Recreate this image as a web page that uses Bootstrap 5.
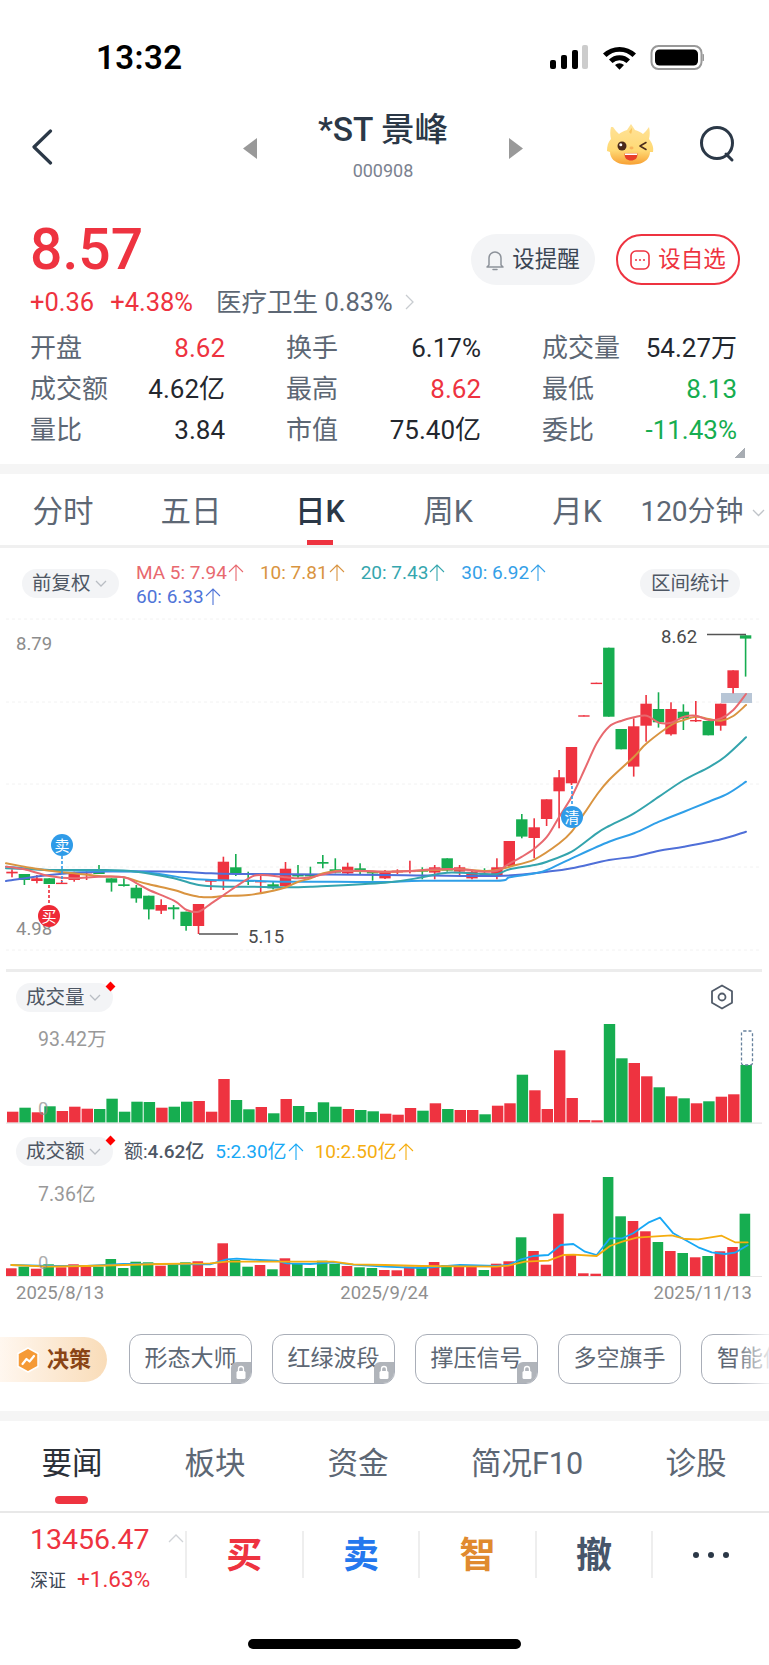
<!DOCTYPE html>
<html lang="zh-CN">
<head>
<meta charset="UTF-8">
<meta name="viewport" content="width=device-width, initial-scale=1.0">
<title>*ST景峰</title>
<link href="https://cdn.jsdelivr.net/npm/bootstrap@5.3.0/dist/css/bootstrap.min.css" rel="stylesheet">
<style>
body { width: 769px; height: 1665px; overflow: hidden; background: #fff; color: #2b3847; font-family: Roboto, "Noto Sans CJK SC", sans-serif; }
.up { color: #ee3340; }
.down { color: #16ad50; }
.status-bar { height: 100px; padding: 37px 65px 0 96px; }
.clock { font: 600 33px/1 Roboto, sans-serif; color: #000; letter-spacing: .4px; }
.top-nav { height: 100px; padding: 25px 32px 0 31px; }
.stock-box { width: 320px; margin-left: 190px; margin-right: 84px; }
.stock-name { font-size: 33.5px; line-height: 40px; font-weight: 500; }
.stock-code { font-size: 18px; line-height: 22px; color: #7b8290; margin-top: 10px; }
.quote { height: 264px; padding: 0 32px 0 30px; position: relative; }
.price { font-size: 57px; line-height: 60px; font-weight: 500; margin-top: 20px; }
.quote-actions { margin-top: 34px; margin-right: -3px; }
.pill-btn { height: 51px; width: 124px; border-radius: 26px; font-size: 22.5px; gap: 8px; }
.pill-grey { background: #f3f4f6; color: #3b4654; }
.pill-red { border: 2px solid #ee3340; color: #ee3340; margin-left: 21px; }
.change-line { font-size: 25.5px; line-height: 30px; margin-top: 2px; }
.sector { color: #5d6774; margin-left: 23px; }
.stat-grid { display: grid; grid-template-columns: repeat(3, 195px); column-gap: 61px; margin-top: 11px; }
.stat-cell { display: flex; justify-content: space-between; height: 41px; align-items: center; font-size: 26px; color: #23272e; }
.stat-cell span:first-child { color: #5d6774; }
.corner { position: absolute; right: 24px; bottom: 6px; width: 10px; height: 10px; background: linear-gradient(135deg, transparent 50%, #a8adb3 50%); }
.band { height: 10px; background: #f5f5f5; }
.k-tabs { height: 74px; border-bottom: 3px solid #f0f0f0; position: relative; font-size: 30.5px; color: #5d6774; }
.k-tab { position: absolute; top: 15px; line-height: 46px; transform: translateX(-50%); white-space: nowrap; }
.k-tab.on { color: #2b3847; font-weight: 500; }
.k-mark { position: absolute; left: 307px; top: 66px; width: 26px; height: 5px; background: #ee3340; }
.k-more { position: absolute; left: 752px; top: 35px; }
.chart-bar { height: 70px; padding: 21px 29px 0 22px; }
.soft-pill { background: #f3f4f6; border-radius: 15px; height: 29px; font-size: 19.5px; color: #4e5764; }
.legend-box { width: 440px; margin-left: 17px; margin-top: -8px; font-size: 19px; line-height: 24px; }
.legend-box span { margin-right: 16px; white-space: nowrap; }
.up-arrow { width: 16px; height: 17px; vertical-align: -2px; margin-left: 1px; fill: none; stroke: currentColor; stroke-width: 1.1; }
.ma5 { color: #e8696f; } .ma10 { color: #d99440; } .ma20 { color: #35a6ae; } .ma30 { color: #34a0e8; } .ma60 { color: #4f74d8; }
.chart-svg { display: block; }
.chart-svg text { font-family: Roboto, "Noto Sans CJK SC", sans-serif; }
.panel-head { padding-left: 16px; position: relative; border-top: 3px solid #ececec; margin: 0 7px 0 6px; }
.vol-head { height: 55px; padding: 11px 0 0 10px; }
.amt-head { height: 52px; padding: 12px 0 0 16px; margin: 0; font-size: 19px; }
.amt-head > span { margin-left: 11px; white-space: nowrap; }
.dot-red { width: 7px; height: 7px; background: #f00; transform: rotate(45deg); position: absolute; right: -1px; top: 0; }
.hex { position: absolute; right: 28px; top: 12px; }
.date-row { height: 30px; padding: 0 17px 0 16px; font-size: 18.5px; color: #8f8f8f; line-height: 30px; }
.signal-row { height: 103px; padding-top: 26px; position: relative; overflow: hidden; }
.decide { width: 107px; height: 45px; margin-top: 3px; border-radius: 0 23px 23px 0; background: linear-gradient(90deg, #fff7ef, #f9dcb8); font-size: 22px; font-weight: 700; color: #8a4416; gap: 7px; padding-left: 16px; flex-shrink: 0; }
.sig-btn { width: 123px; height: 50px; flex-shrink: 0; margin-left: 20px; border: 1.5px solid #a9aeb8; border-radius: 12px; font-size: 23px; color: #5d6774; position: relative; white-space: nowrap; overflow: hidden; }
.sig-cut { justify-content: flex-start; padding-left: 15px; }
.lock-tag { position: absolute; right: 0; bottom: 0; width: 20px; height: 21px; background: #b0b4ba; border-radius: 6px 0 0 0; }
.lock-tag svg { display: block; }
.fade-right { position: absolute; right: 0; top: 20px; bottom: 20px; width: 36px; background: linear-gradient(90deg, rgba(255,255,255,0), rgba(255,255,255,.85)); }
.news-tabs { height: 92px; border-bottom: 2px solid #e8e8e8; position: relative; font-size: 30.5px; color: #5d6774; }
.news-tab { position: absolute; top: 20px; line-height: 46px; transform: translateX(-50%); white-space: nowrap; }
.news-tab.on { color: #2b3038; }
.news-mark { position: absolute; left: 55px; top: 75px; width: 33px; height: 8px; border-radius: 4px; background: #ee3340; }
.trade-bar { height: 92px; padding: 9px 0 0 30px; }
.index-box { width: 155px; flex-shrink: 0; position: relative; }
.index-val { font-size: 28.5px; line-height: 36px; color: #ee3340; }
.index-sub { font-size: 18px; line-height: 30px; margin-top: 6px; color: #3b4654; }
.index-sub .up { font-size: 22.5px; margin-left: 11px; }
.caret-up { position: absolute; right: 1px; top: 11px; }
.trade-btn { width: 116.6px; height: 47px; margin-top: 9px; border-left: 2px solid #eeeeee; font-size: 36px; font-weight: 700; line-height: 50px; text-align: center; }
.home-bar { width: 273px; height: 10px; border-radius: 5px; background: #000; margin: 34px 0 0 248px; }
</style>
</head>
<body>

<!-- status bar -->
<div class="status-bar d-flex justify-content-between">
    <div class="clock mt-1">13:32</div>
    <svg width="154" height="26" viewBox="0 0 154 26" class="mt-2">
        <rect x="0" y="15" width="6" height="9" rx="2" fill="#000"/>
        <rect x="11" y="10" width="6" height="14" rx="2" fill="#000"/>
        <rect x="22" y="5" width="6" height="19" rx="2" fill="#000"/>
        <rect x="32" y="0" width="6" height="24" rx="2" fill="#ccc"/>
        <path d="M53 8.5a24 24 0 0 1 33 0l-3.500 3.500a19 19 0 0 0-26 0zM59 14.500a15 15 0 0 1 21 0l-3.500 3.500a10 10 0 0 0-14 0zM65 20a7 7 0 0 1 9 0l-4.500 4.800z" fill="#000"/>
        <rect x="101.500" y="1" width="50" height="23" rx="7" fill="none" stroke="#999" stroke-width="2"/>
        <rect x="105" y="4.500" width="43" height="16" rx="4.500" fill="#000"/>
        <path d="M152.500 9v7a3.500 3.500 0 0 0 0-7z" fill="#999"/>
    </svg>
</div>

<!-- nav -->
<div class="top-nav d-flex align-items-start">
    <svg width="22" height="36" viewBox="0 0 22 36" class="mt-1 flex-shrink-0">
        <path d="M19.500 2L3 18l16.500 16" fill="none" stroke="#2b3847" stroke-width="3.200" stroke-linecap="round" stroke-linejoin="round"/>
    </svg>
    <div class="stock-box d-flex align-items-start justify-content-between">
        <svg width="14" height="21" viewBox="0 0 14 21" style="margin-top:13px"><path d="M14 0v21L0 10.500z" fill="#999"/></svg>
        <div class="text-center" style="margin-top:-15px">
            <div class="stock-name">*ST 景峰</div>
            <div class="stock-code">000908</div>
        </div>
        <svg width="14" height="21" viewBox="0 0 14 21" style="margin-top:13px"><path d="M0 0v21l14-10.500z" fill="#999"/></svg>
    </div>
    <svg width="50" height="46" viewBox="0 0 50 46" class="flex-shrink-0" style="margin-top:-1px">
        <defs>
            <linearGradient id="fur" x1="0" y1="0" x2="0" y2="1"><stop offset="0" stop-color="#ffe39a"/><stop offset=".65" stop-color="#ffd974"/><stop offset="1" stop-color="#f7a033"/></linearGradient>
        </defs>
        <path d="M6 3c2 3 4 5 6 7 2-2 5-3 8-4l4-6 4 6c3 1 6 2 8 4 2-2 4-4 6-7 1 4 1 8 0 12 3 4 5 8 4 13l-3 0c0 6-5 11-12 12-5 1-11 1-16 0-7-1-12-6-12-12l-3-1c0-5 1-9 4-12-1-4-1-8 0-12z" fill="url(#fur)"/>
        <path d="M22 8c1-2 2-3 3-4 0 2 0 4-1 6z" fill="#f9c45e"/>
        <circle cx="15" cy="22" r="4.500" fill="#4a2a1a"/>
        <circle cx="13.800" cy="20.800" r="1.500" fill="#fff"/>
        <path d="M39 18.500l-6 3.500 6 3.500" fill="none" stroke="#4a2a1a" stroke-width="1.500" stroke-linecap="round" stroke-linejoin="round"/>
        <path d="M17.500 29.500h13c0 5-2.500 7-6.500 7s-6.500-2-6.500-7z" fill="#e8402a"/>
        <path d="M18 29.500h12v1.500H18z" fill="#fff"/>
        <ellipse cx="24.500" cy="24" rx="2" ry="1.400" fill="#f8b45c"/>
    </svg>
    <svg width="38" height="38" viewBox="0 0 38 38" class="flex-shrink-0" style="margin-left:42px">
        <circle cx="18" cy="18" r="15.500" fill="none" stroke="#2b3847" stroke-width="3"/>
        <path d="M27 29l6 6" stroke="#2b3847" stroke-width="3" stroke-linecap="round"/>
    </svg>
</div>

<!-- quote -->
<div class="quote">
    <div class="d-flex justify-content-between align-items-start">
        <div class="price up">8.57</div>
        <div class="d-flex quote-actions">
            <div class="pill-btn pill-grey d-flex align-items-center justify-content-center">
                <svg width="18" height="22" viewBox="0 0 18 22"><path d="M3 16V9a6 6 0 0 1 12 0v7l2 2H1zM7 20.500h4" fill="none" stroke="#8d929a" stroke-width="1.500" stroke-linejoin="round" stroke-linecap="round"/></svg>
                设提醒
            </div>
            <div class="pill-btn pill-red d-flex align-items-center justify-content-center">
                <svg width="20" height="20" viewBox="0 0 20 20"><rect x="1" y="1" width="18" height="18" rx="5" fill="none" stroke="#ee3340" stroke-width="1.600"/><circle cx="6" cy="10" r="1" fill="#ee3340"/><circle cx="10" cy="10" r="1" fill="#ee3340"/><circle cx="14" cy="10" r="1" fill="#ee3340"/></svg>
                设自选
            </div>
        </div>
    </div>
    <div class="change-line d-flex align-items-center">
        <span class="up">+0.36</span><span class="up" style="margin-left:16px">+4.38%</span>
        <span class="sector">医疗卫生 0.83%</span>
        <svg width="9" height="16" viewBox="0 0 9 16" style="margin-left:12px"><path d="M1 1l7 7-7 7" fill="none" stroke="#c8ccd0" stroke-width="1.300"/></svg>
    </div>
    <div class="stat-grid">
        <div class="stat-cell"><span>开盘</span><span class="up">8.62</span></div>
        <div class="stat-cell"><span>换手</span><span>6.17%</span></div>
        <div class="stat-cell"><span>成交量</span><span>54.27万</span></div>
        <div class="stat-cell"><span>成交额</span><span>4.62亿</span></div>
        <div class="stat-cell"><span>最高</span><span class="up">8.62</span></div>
        <div class="stat-cell"><span>最低</span><span class="down">8.13</span></div>
        <div class="stat-cell"><span>量比</span><span>3.84</span></div>
        <div class="stat-cell"><span>市值</span><span>75.40亿</span></div>
        <div class="stat-cell"><span>委比</span><span class="down">-11.43%</span></div>
    </div>
    <div class="corner"></div>
</div>
<div class="band"></div>

<!-- period tabs -->
<div class="k-tabs">
    <div class="k-tab" style="left:63px">分时</div>
    <div class="k-tab" style="left:191px">五日</div>
    <div class="k-tab on" style="left:320px">日K</div>
    <div class="k-tab" style="left:448px">周K</div>
    <div class="k-tab" style="left:577px">月K</div>
    <div class="k-tab" style="left:692px;font-size:28px">120分钟</div>
    <svg class="k-more" width="13" height="8" viewBox="0 0 13 8"><path d="M1 1l5.500 5.500L12 1" fill="none" stroke="#c0c4c9" stroke-width="1.300"/></svg>
    <div class="k-mark"></div>
</div>

<!-- chart toolbar -->
<div class="chart-bar d-flex align-items-start">
    <div class="soft-pill d-flex align-items-center gap-1 flex-shrink-0" style="width:97px;padding-left:10px">前复权
        <svg width="12" height="7" viewBox="0 0 12 7"><path d="M1 1l5 5 5-5" fill="none" stroke="#b9bdc3" stroke-width="1.300"/></svg>
    </div>
    <div class="legend-box flex-shrink-0">
        <span class="ma5">MA 5: 7.94<svg class="up-arrow" viewBox="0 0 16 17"><path d="M1 8l7-7 7 7M8 1v16"/></svg></span><span class="ma10">10: 7.81<svg class="up-arrow" viewBox="0 0 16 17"><path d="M1 8l7-7 7 7M8 1v16"/></svg></span><span class="ma20">20: 7.43<svg class="up-arrow" viewBox="0 0 16 17"><path d="M1 8l7-7 7 7M8 1v16"/></svg></span><span class="ma30">30: 6.92<svg class="up-arrow" viewBox="0 0 16 17"><path d="M1 8l7-7 7 7M8 1v16"/></svg></span><br>
        <span class="ma60">60: 6.33<svg class="up-arrow" viewBox="0 0 16 17"><path d="M1 8l7-7 7 7M8 1v16"/></svg></span>
    </div>
    <div class="soft-pill d-flex align-items-center justify-content-center flex-shrink-0 ms-auto" style="width:100px">区间统计</div>
</div>

<!-- main chart, drawn in screen coordinates through the viewBox -->
<svg id="main-chart" class="chart-svg" width="769" height="351" viewBox="0 618 769 351"></svg>

<div class="panel-head vol-head">
    <div class="soft-pill d-inline-flex align-items-center gap-1 position-relative" style="width:97px;padding-left:10px">成交量
        <svg width="12" height="7" viewBox="0 0 12 7"><path d="M1 1l5 5 5-5" fill="none" stroke="#b9bdc3" stroke-width="1.300"/></svg>
        <i class="dot-red"></i>
    </div>
    <svg class="hex" width="24" height="26" viewBox="0 0 24 26"><path d="M12 1.500l10 5.700v11.600l-10 5.700-10-5.700V7.200z" fill="none" stroke="#515b69" stroke-width="1.800" stroke-linejoin="round"/><circle cx="12" cy="13" r="3.500" fill="none" stroke="#515b69" stroke-width="1.800"/></svg>
</div>
<svg id="vol-chart" class="chart-svg" width="769" height="101" viewBox="0 1024 769 101"></svg>

<div class="panel-head amt-head d-flex align-items-start" style="border-top:0">
    <div class="soft-pill d-inline-flex align-items-center gap-1 position-relative flex-shrink-0" style="width:97px;padding-left:10px">成交额
        <svg width="12" height="7" viewBox="0 0 12 7"><path d="M1 1l5 5 5-5" fill="none" stroke="#b9bdc3" stroke-width="1.300"/></svg>
        <i class="dot-red"></i>
    </div>
    <span style="color:#4e5764;margin-top:1px">额:<b class="fw-medium">4.62亿</b></span>
    <span style="color:#18a8f5;margin-top:1px">5:2.30亿<svg class="up-arrow" viewBox="0 0 16 17"><path d="M1 8l7-7 7 7M8 1v16"/></svg></span>
    <span style="color:#f5ad0f;margin-top:1px">10:2.50亿<svg class="up-arrow" viewBox="0 0 16 17"><path d="M1 8l7-7 7 7M8 1v16"/></svg></span>
</div>
<svg id="amt-chart" class="chart-svg" width="769" height="101" viewBox="0 1177 769 101"></svg>

<div class="date-row d-flex justify-content-between">
    <span>2025/8/13</span><span style="margin-left:11px">2025/9/24</span><span>2025/11/13</span>
</div>

<!-- signal buttons -->
<div class="signal-row d-flex align-items-start">
    <div class="decide d-flex align-items-center">
        <svg width="24" height="26" viewBox="0 0 24 26"><path d="M12 1l10 5.500v13L12 25 2 19.500v-13z" fill="#f59a36" stroke="#fff" stroke-width="1.500" stroke-linejoin="round"/><path d="M6.500 17l4-5 3 2.500L18 9" fill="none" stroke="#fff" stroke-width="2.200" stroke-linecap="round" stroke-linejoin="round"/></svg>
        <span>决策</span>
    </div>
    <div class="sig-btn d-flex align-items-center justify-content-center" style="margin-left:22px">形态大师<i class="lock-tag" data-lock></i></div>
    <div class="sig-btn d-flex align-items-center justify-content-center">红绿波段<i class="lock-tag" data-lock></i></div>
    <div class="sig-btn d-flex align-items-center justify-content-center">撑压信号<i class="lock-tag" data-lock></i></div>
    <div class="sig-btn d-flex align-items-center justify-content-center">多空旗手</div>
    <div class="sig-btn d-flex align-items-center sig-cut">智能信号</div>
    <div class="fade-right"></div>
</div>
<div class="band"></div>

<!-- news tabs -->
<div class="news-tabs">
    <div class="news-tab on" style="left:72px">要闻</div>
    <div class="news-tab" style="left:215px">板块</div>
    <div class="news-tab" style="left:358px">资金</div>
    <div class="news-tab" style="left:527px">简况F10</div>
    <div class="news-tab" style="left:696px">诊股</div>
    <div class="news-mark"></div>
</div>

<!-- bottom trade bar -->
<div class="trade-bar d-flex align-items-start">
    <div class="index-box">
        <div class="index-val">13456.47</div>
        <div class="index-sub">深证<span class="up">+1.63%</span></div>
        <svg class="caret-up" width="16" height="10" viewBox="0 0 16 10"><path d="M1 9l7-7 7 7" fill="none" stroke="#d0d3d7" stroke-width="1.300"/></svg>
    </div>
    <div class="trade-btn up">买</div>
    <div class="trade-btn" style="color:#2478ee">卖</div>
    <div class="trade-btn" style="color:#e08a2e">智</div>
    <div class="trade-btn" style="color:#47566b">撤</div>
    <div class="trade-btn d-flex align-items-center justify-content-center" style="gap:10px">
        <svg width="38" height="8" viewBox="0 0 38 8"><circle cx="4" cy="4" r="3" fill="#2b3847"/><circle cx="19" cy="4" r="3" fill="#2b3847"/><circle cx="34" cy="4" r="3" fill="#2b3847"/></svg>
    </div>
</div>
<div class="home-bar"></div>

<script src="https://cdn.jsdelivr.net/npm/bootstrap@5.3.0/dist/js/bootstrap.bundle.min.js"></script>
<script>
    const RED = '#ee3340', GREEN = '#16ad50';

    // values were read off the reference at 3x: y here = (screen y - panel base) * 3
    // [color, bodyTop, bodyBottom, wickTop, wickBottom]
    const candles = [
        ['r',965,970,958,982],['g',972,990,972,1005],['r',985,993,975,1000],['g',985,1002,985,1002],['r',998,1002,990,1002],
        ['r',972,990,965,995],['r',966,970,960,990],['g',962,972,945,972],['g',985,998,985,1025],['g',1003,1008,985,1010],
        ['g',1013,1045,1005,1058],['g',1037,1078,1037,1108],['r',1065,1082,1048,1092],['g',1072,1078,1065,1108],['g',1085,1128,1085,1142],
        ['r',1062,1128,1062,1152],['r',990,995,990,1020],['r',935,992,920,1020],['g',952,970,912,978],['g',990,995,965,1005],
        ['r',993,997,975,1028],['g',1003,1015,995,1018],['r',956,1008,936,1012],['g',975,978,945,985],['g',975,978,950,985],
        ['g',936,941,915,955],['g',958,968,925,970],['r',950,970,938,972],['g',955,960,940,972],['g',965,970,965,992],
        ['r',965,985,960,987],['r',962,967,958,972],['r',962,965,932,970],['g',960,965,952,988],['r',952,968,945,988],
        ['g',925,962,925,965],['r',952,965,945,975],['r',965,985,960,988],['g',962,966,955,975],['r',952,975,925,988],
        ['r',873,948,873,950],['g',808,860,792,865],['r',832,864,805,925],['r',748,807,748,828],['r',682,724,660,835],
        ['r',591,700,591,705],['r',496,499,496,499],['r',398,401,398,401],['g',293,500,293,500],['g',537,598,537,598],
        ['r',529,650,505,680],['r',461,527,435,575],['g',477,517,427,533],['r',477,553,457,557],['g',485,505,463,540],
        ['r',510,514,453,516],['g',513,556,513,556],['r',461,527,461,542],['r',361,414,361,430],['g',256,266,256,380]
    ];
    const volumes = 'r455 g443 r457 g439 r453 r440 r446 g447 g416 g455 g425 g426 r443 g440 g425 r423 r455 r357 g420 g448 r441 g460 r417 g438 g456 g427 g440 r447 g450 g454 r461 r464 r444 g452 r430 g447 r450 r450 g463 r437 r430 g344 r391 r447 r271 r414 r480 r481 g190 g295 r309 r349 g382 r409 g415 r430 g424 r410 r403 g315'.split(' ');
    const amounts = 'r925 g920 r926 g913 r922 r913 r920 g920 g897 g924 g905 g907 r917 g915 g907 r904 r924 r850 g900 g920 r915 g928 r895 g912 g924 g902 g912 r918 g922 g924 r930 r931 r920 g920 r906 g915 r920 r920 g930 r911 r904 g832 r873 r914 r761 r882 r940 r941 g650 g769 r783 r814 g846 r873 g879 r892 g888 r874 r861 g761'.split(' ');

    // second half of each line was read from a crop that starts at x = 385
    const R = 1155;
    const maLines = [
        { color: '#4f6fd8', pts: [18,993,148,975,297,965,522,965,634,970,746,972,R,975,R+337,978,R+486,965,R+560,955,R+672,930,R+747,920,R+822,902,R+897,890,R+1008,868,R+1083,845] },
        { color: '#2f9fe8', pts: [18,950,148,960,297,962,447,968,560,985,634,990,746,992,858,995,1007,995,R,996,R+112,992,R+337,992,R+374,982,R+449,970,R+486,960,R+560,925,R+672,875,R+747,850,R+822,815,R+897,785,R+971,755,R+1030,730,R+1083,695] },
        { color: '#34a4ad', pts: [18,955,148,960,297,960,410,965,522,985,596,1005,671,1010,746,1010,858,1012,932,1010,R,998,R+112,982,R+187,968,R+300,972,R+337,972,R+374,958,R+449,945,R+486,935,R+560,905,R+635,850,R+672,828,R+747,790,R+822,740,R+897,690,R+971,652,R+1020,620,R+1083,562] },
        { color: '#d99440', pts: [18,940,73,950,148,962,222,970,297,978,372,982,410,993,447,1003,522,1020,560,1032,596,1040,634,1042,671,1038,746,1035,820,1022,858,1012,895,995,932,985,970,970,1007,963,1044,962,R,965,R+75,963,R+150,960,R+225,958,R+300,963,R+337,960,R+374,950,R+449,928,R+523,880,R+560,845,R+598,790,R+635,735,R+672,690,R+747,620,R+785,580,R+859,525,R+897,510,R+934,500,R+971,507,R+1008,512,R+1045,498,R+1083,465] },
        { color: '#e8696f', pts: [18,950,73,958,148,978,222,985,297,980,372,982,410,1000,447,1020,522,1052,560,1080,596,1085,634,1060,671,1035,746,985,783,975,858,982,895,985,932,982,1007,965,1081,962,R,965,R+75,963,R+150,958,R+225,958,R+300,965,R+337,962,R+374,940,R+411,920,R+449,895,R+486,860,R+523,800,R+560,740,R+598,660,R+635,580,R+672,530,R+710,512,R+747,502,R+785,497,R+822,518,R+859,518,R+897,500,R+934,497,R+971,510,R+1008,505,R+1045,480,R+1083,432] }
    ];
    const amtBlue = [34,915,145,918,260,918,370,912,480,912,630,913,680,898,710,896,780,900,830,902,860,910,930,912,1000,907,1060,914,R,920,R+110,924,R+225,915,R+333,918,R+370,915,R+408,898,R+445,888,R+490,885,R+527,855,R+565,852,R+600,875,R+635,885,R+675,835,R+712,835,R+745,820,R+790,788,R+825,773,R+865,820,R+940,862,R+980,877,R+1020,882,R+1050,878,R+1088,856];
    const amtOrange = [34,915,145,920,260,918,370,915,480,912,630,910,680,905,720,905,830,905,860,905,1000,905,1060,913,R,915,R+110,918,R+225,919,R+333,920,R+370,917,R+420,905,R+490,902,R+535,885,R+565,884,R+635,888,R+675,858,R+712,845,R+755,833,R+860,826,R+900,837,R+940,838,R+1010,827,R+1050,847,R+1088,847];

    const fmt = n => n.toFixed(1);

    function polyline(pts, base, color, width) {
        let p = '';
        for (let i = 0; i < pts.length; i += 2) p += fmt(pts[i] / 3) + ',' + fmt(base + pts[i + 1] / 3) + ' ';
        return `<polyline points="${p}" fill="none" stroke="${color}" stroke-width="${width}" stroke-linejoin="round" stroke-linecap="round"/>`;
    }

    function smooth(pts, base, color, width) {
        // catmull-rom through the read points, the MA lines are curved in the app
        const P = [];
        for (let i = 0; i < pts.length; i += 2) P.push([pts[i] / 3, base + pts[i + 1] / 3]);
        let d = `M${fmt(P[0][0])} ${fmt(P[0][1])}`;
        for (let i = 0; i < P.length - 1; i++) {
            const a = P[Math.max(i - 1, 0)], b = P[i], c = P[i + 1], e = P[Math.min(i + 2, P.length - 1)];
            d += `C${fmt(b[0] + (c[0] - a[0]) / 6)} ${fmt(b[1] + (c[1] - a[1]) / 6)} ${fmt(c[0] - (e[0] - b[0]) / 6)} ${fmt(c[1] - (e[1] - b[1]) / 6)} ${fmt(c[0])} ${fmt(c[1])}`;
        }
        return `<path d="${d}" fill="none" stroke="${color}" stroke-width="${width}" stroke-linecap="round"/>`;
    }

    function drawMain() {
        const base = 550;
        let s = '';
        [619, 702, 784, 867, 950].forEach(y => {
            s += `<line x1="6" x2="762" y1="${y}" y2="${y}" stroke="#f2f2f2" stroke-width="1" stroke-dasharray="3 3"/>`;
        });
        s += `<rect x="721" y="693" width="31" height="10" fill="#b8c6d6"/>`;
        candles.forEach((c, i) => {
            const x = (36 + 37.3 * i) / 3, col = c[0] === 'r' ? RED : GREEN;
            s += `<rect x="${fmt(x - .8)}" y="${fmt(base + c[3] / 3)}" width="1.600" height="${fmt((c[4] - c[3]) / 3)}" fill="${col}"/>`;
            const h = Math.max((c[2] - c[1]) / 3, 1.4);
            s += `<rect x="${fmt(x - 5.7)}" y="${fmt(base + c[1] / 3)}" width="11.400" height="${fmt(h)}" fill="${col}"/>`;
        });
        maLines.forEach(m => { s += smooth(m.pts, base, m.color, 2); });

        s += `<text x="16" y="650" font-size="18.500" fill="#8c8c8c">8.79</text>`;
        s += `<text x="16" y="935" font-size="18.500" fill="#8c8c8c">4.98</text>`;
        s += `<text x="248" y="943" font-size="18.500" fill="#4a4a4a">5.15</text>`;
        s += `<text x="661" y="643" font-size="18.500" fill="#4a4a4a">8.62</text>`;
        s += `<line x1="199" x2="238" y1="934" y2="934" stroke="#555" stroke-width="1.500"/>`;
        s += `<line x1="707" x2="746" y1="634.500" y2="634.500" stroke="#555" stroke-width="1.500"/>`;

        // buy / sell markers
        const marks = [[62, 845, '#2f9be8', '卖', 856, 882], [49, 916, '#ee2a36', '买', 885, 905], [572, 817, '#2f9be8', '清', 786, 806]];
        marks.forEach(m => {
            s += `<line x1="${m[0]}" x2="${m[0]}" y1="${m[4]}" y2="${m[5]}" stroke="${m[2]}" stroke-width="1.600" stroke-dasharray="3 2"/>`;
            s += `<circle cx="${m[0]}" cy="${m[1]}" r="11" fill="${m[2]}"/>`;
            s += `<text x="${m[0]}" y="${m[1] + 5.500}" font-size="15" fill="#fff" text-anchor="middle">${m[3]}</text>`;
        });
        document.getElementById('main-chart').innerHTML = s;
    }

    function drawBars(id, list, base, x0, width, baseline, extra) {
        let s = '';
        list.forEach((v, i) => {
            const x = (x0 + 37.3 * i) / 3, top = base + Number(v.slice(1)) / 3;
            s += `<rect x="${fmt(x - width / 2)}" y="${fmt(top)}" width="${width}" height="${fmt(baseline - top)}" fill="${v[0] === 'r' ? RED : GREEN}"/>`;
        });
        s += `<line x1="6" x2="762" y1="${baseline + .5}" y2="${baseline + .5}" stroke="#e6e6e6" stroke-width="1.200"/>`;
        document.getElementById(id).innerHTML = s + extra;
    }

    drawMain();
    drawBars('vol-chart', volumes, 960, 38, 11.4, 1122.7,
        `<rect x="741.500" y="1031" width="11" height="34" rx="2" fill="none" stroke="#66809c" stroke-width="1.300" stroke-dasharray="3 2"/>` +
        `<text x="38" y="1046" font-size="19.500" fill="#999">93.42万</text>` +
        `<text x="38" y="1115" font-size="18.500" fill="#8c8c8c" opacity=".7">0</text>`);
    drawBars('amt-chart', amounts, 960, 34, 10.6, 1276,
        polyline(amtBlue, 960, '#18a8f5', 1.800) + polyline(amtOrange, 960, '#f5ad0f', 1.800) +
        `<text x="38" y="1201" font-size="19.500" fill="#999">7.36亿</text>` +
        `<text x="38" y="1269" font-size="18.500" fill="#8c8c8c" opacity=".7">0</text>`);

    // small padlock on the locked buttons
    document.querySelectorAll('[data-lock]').forEach(el => {
        el.innerHTML = '<svg width="20" height="21" viewBox="0 0 20 21"><rect x="5.500" y="9" width="9" height="8" rx="1.500" fill="#fff"/><path d="M7.500 9V7a2.500 2.500 0 0 1 5 0v2" fill="none" stroke="#fff" stroke-width="1.300"/></svg>';
    });
</script>
</body>
</html>
